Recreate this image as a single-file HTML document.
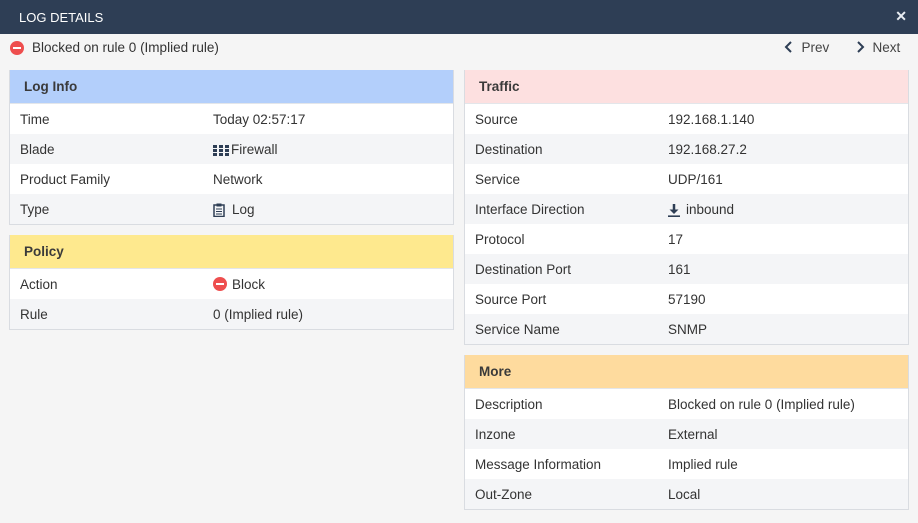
<!DOCTYPE html>
<html><head><meta charset="utf-8"><style>
*{margin:0;padding:0;box-sizing:border-box}
body{width:918px;height:523px;background:#f5f5f5;font-family:"Liberation Sans",sans-serif;font-size:13.5px;color:#333;position:relative;overflow:hidden}
.top{position:absolute;left:0;top:0;width:918px;height:34px;background:#2e3e55;color:#fff}
.top .t{position:absolute;left:19px;top:10px;font-size:13px}
.top .x{position:absolute;right:11px;top:8px;font-size:14px;font-weight:bold;color:#e8ecf2}
.msg{position:absolute;left:10px;top:41px;height:14px;line-height:14px}
.msg span{position:absolute;left:22px;top:0;white-space:nowrap}
.dot{position:absolute;width:14px;height:14px;border-radius:50%;background:#ee4e4e}
.dot:after{content:"";position:absolute;left:3px;top:6px;width:8px;height:2px;background:#fff}
.nav{position:absolute;top:41px;line-height:14px;color:#444}
.panel{position:absolute;background:#fff;border:1px solid #d9dce1;border-top:none}
.ph{height:34px;line-height:33px;padding-left:14px;font-weight:bold;color:#3a3a3a;border-bottom:1px solid #e3e6ea}
.row{height:30px;line-height:31px;position:relative}
.row .l{position:absolute;left:10px}
.row .v{position:absolute;left:203px}
.ico{display:inline-block;vertical-align:middle;position:relative;margin-right:5px}
</style></head><body>
<div class="top"><div class="t">LOG DETAILS</div><div class="x">✕</div></div>
<div class="msg"><div class="dot" style="left:0;top:0"></div><span>Blocked on rule 0 (Implied rule)</span></div>
<div class="nav" style="left:784px"><svg width="10" height="12" style="vertical-align:-1px"><path d="M7 1L2 6l5 5" stroke="#2e3e55" stroke-width="2" fill="none"/></svg>&nbsp; Prev</div>
<div class="nav" style="left:855px"><svg width="10" height="12" style="vertical-align:-1px"><path d="M3 1l5 5-5 5" stroke="#2e3e55" stroke-width="2" fill="none"/></svg>&nbsp; Next</div>

<div class="panel" style="left:9px;top:70px;width:445px">
<div class="ph" style="background:#b3cffb">Log Info</div>
<div class="row" style="background:#fff"><span class="l">Time</span><span class="v">Today 02:57:17</span></div>
<div class="row" style="background:#f4f5f7"><span class="l">Blade</span><span class="v"><svg class="ico" width="16" height="11" style="margin-right:2px"><g fill="#2e3e55"><rect x="0" y="0" width="4" height="3"/><rect x="6" y="0" width="4" height="3"/><rect x="12" y="0" width="4" height="3"/><rect x="0" y="4" width="4" height="3"/><rect x="6" y="4" width="4" height="3"/><rect x="12" y="4" width="4" height="3"/><rect x="0" y="8" width="4" height="3"/><rect x="6" y="8" width="4" height="3"/><rect x="12" y="8" width="4" height="3"/></g></svg>Firewall</span></div>
<div class="row" style="background:#fff"><span class="l">Product Family</span><span class="v">Network</span></div>
<div class="row" style="background:#f4f5f7"><span class="l">Type</span><span class="v"><svg class="ico" width="12" height="14" style="margin-right:7px"><rect x="1" y="2" width="10" height="11.5" fill="none" stroke="#2e3e55" stroke-width="1.5"/><rect x="3.5" y="0.5" width="5" height="3" fill="#2e3e55"/><path d="M3 6h6M3 8.5h6M3 11h6" stroke="#2e3e55"/></svg>Log</span></div>
</div>

<div class="panel" style="left:9px;top:235px;width:445px">
<div class="ph" style="background:#fee98e">Policy</div>
<div class="row" style="background:#fff"><span class="l">Action</span><span class="v"><span class="ico" style="width:14px;height:14px;margin-right:5px;top:-1px"><span class="dot" style="left:0;top:0"></span></span>Block</span></div>
<div class="row" style="background:#f4f5f7"><span class="l">Rule</span><span class="v">0 (Implied rule)</span></div>
</div>

<div class="panel" style="left:464px;top:70px;width:445px">
<div class="ph" style="background:#fde0e0">Traffic</div>
<div class="row" style="background:#fff"><span class="l">Source</span><span class="v">192.168.1.140</span></div>
<div class="row" style="background:#f4f5f7"><span class="l">Destination</span><span class="v">192.168.27.2</span></div>
<div class="row" style="background:#fff"><span class="l">Service</span><span class="v">UDP/161</span></div>
<div class="row" style="background:#f4f5f7"><span class="l">Interface Direction</span><span class="v"><svg class="ico" width="12" height="13" style="margin-right:6px"><path d="M6 0v8" stroke="#2e3e55" stroke-width="2.5"/><path d="M1.5 5.5L6 10l4.5-4.5z" fill="#2e3e55"/><path d="M0 12.2h12" stroke="#2e3e55" stroke-width="1.6"/></svg>inbound</span></div>
<div class="row" style="background:#fff"><span class="l">Protocol</span><span class="v">17</span></div>
<div class="row" style="background:#f4f5f7"><span class="l">Destination Port</span><span class="v">161</span></div>
<div class="row" style="background:#fff"><span class="l">Source Port</span><span class="v">57190</span></div>
<div class="row" style="background:#f4f5f7"><span class="l">Service Name</span><span class="v">SNMP</span></div>
</div>

<div class="panel" style="left:464px;top:355px;width:445px">
<div class="ph" style="background:#fedb9e">More</div>
<div class="row" style="background:#fff"><span class="l">Description</span><span class="v">Blocked on rule 0 (Implied rule)</span></div>
<div class="row" style="background:#f4f5f7"><span class="l">Inzone</span><span class="v">External</span></div>
<div class="row" style="background:#fff"><span class="l">Message Information</span><span class="v">Implied rule</span></div>
<div class="row" style="background:#f4f5f7"><span class="l">Out-Zone</span><span class="v">Local</span></div>
</div>
</body></html>
